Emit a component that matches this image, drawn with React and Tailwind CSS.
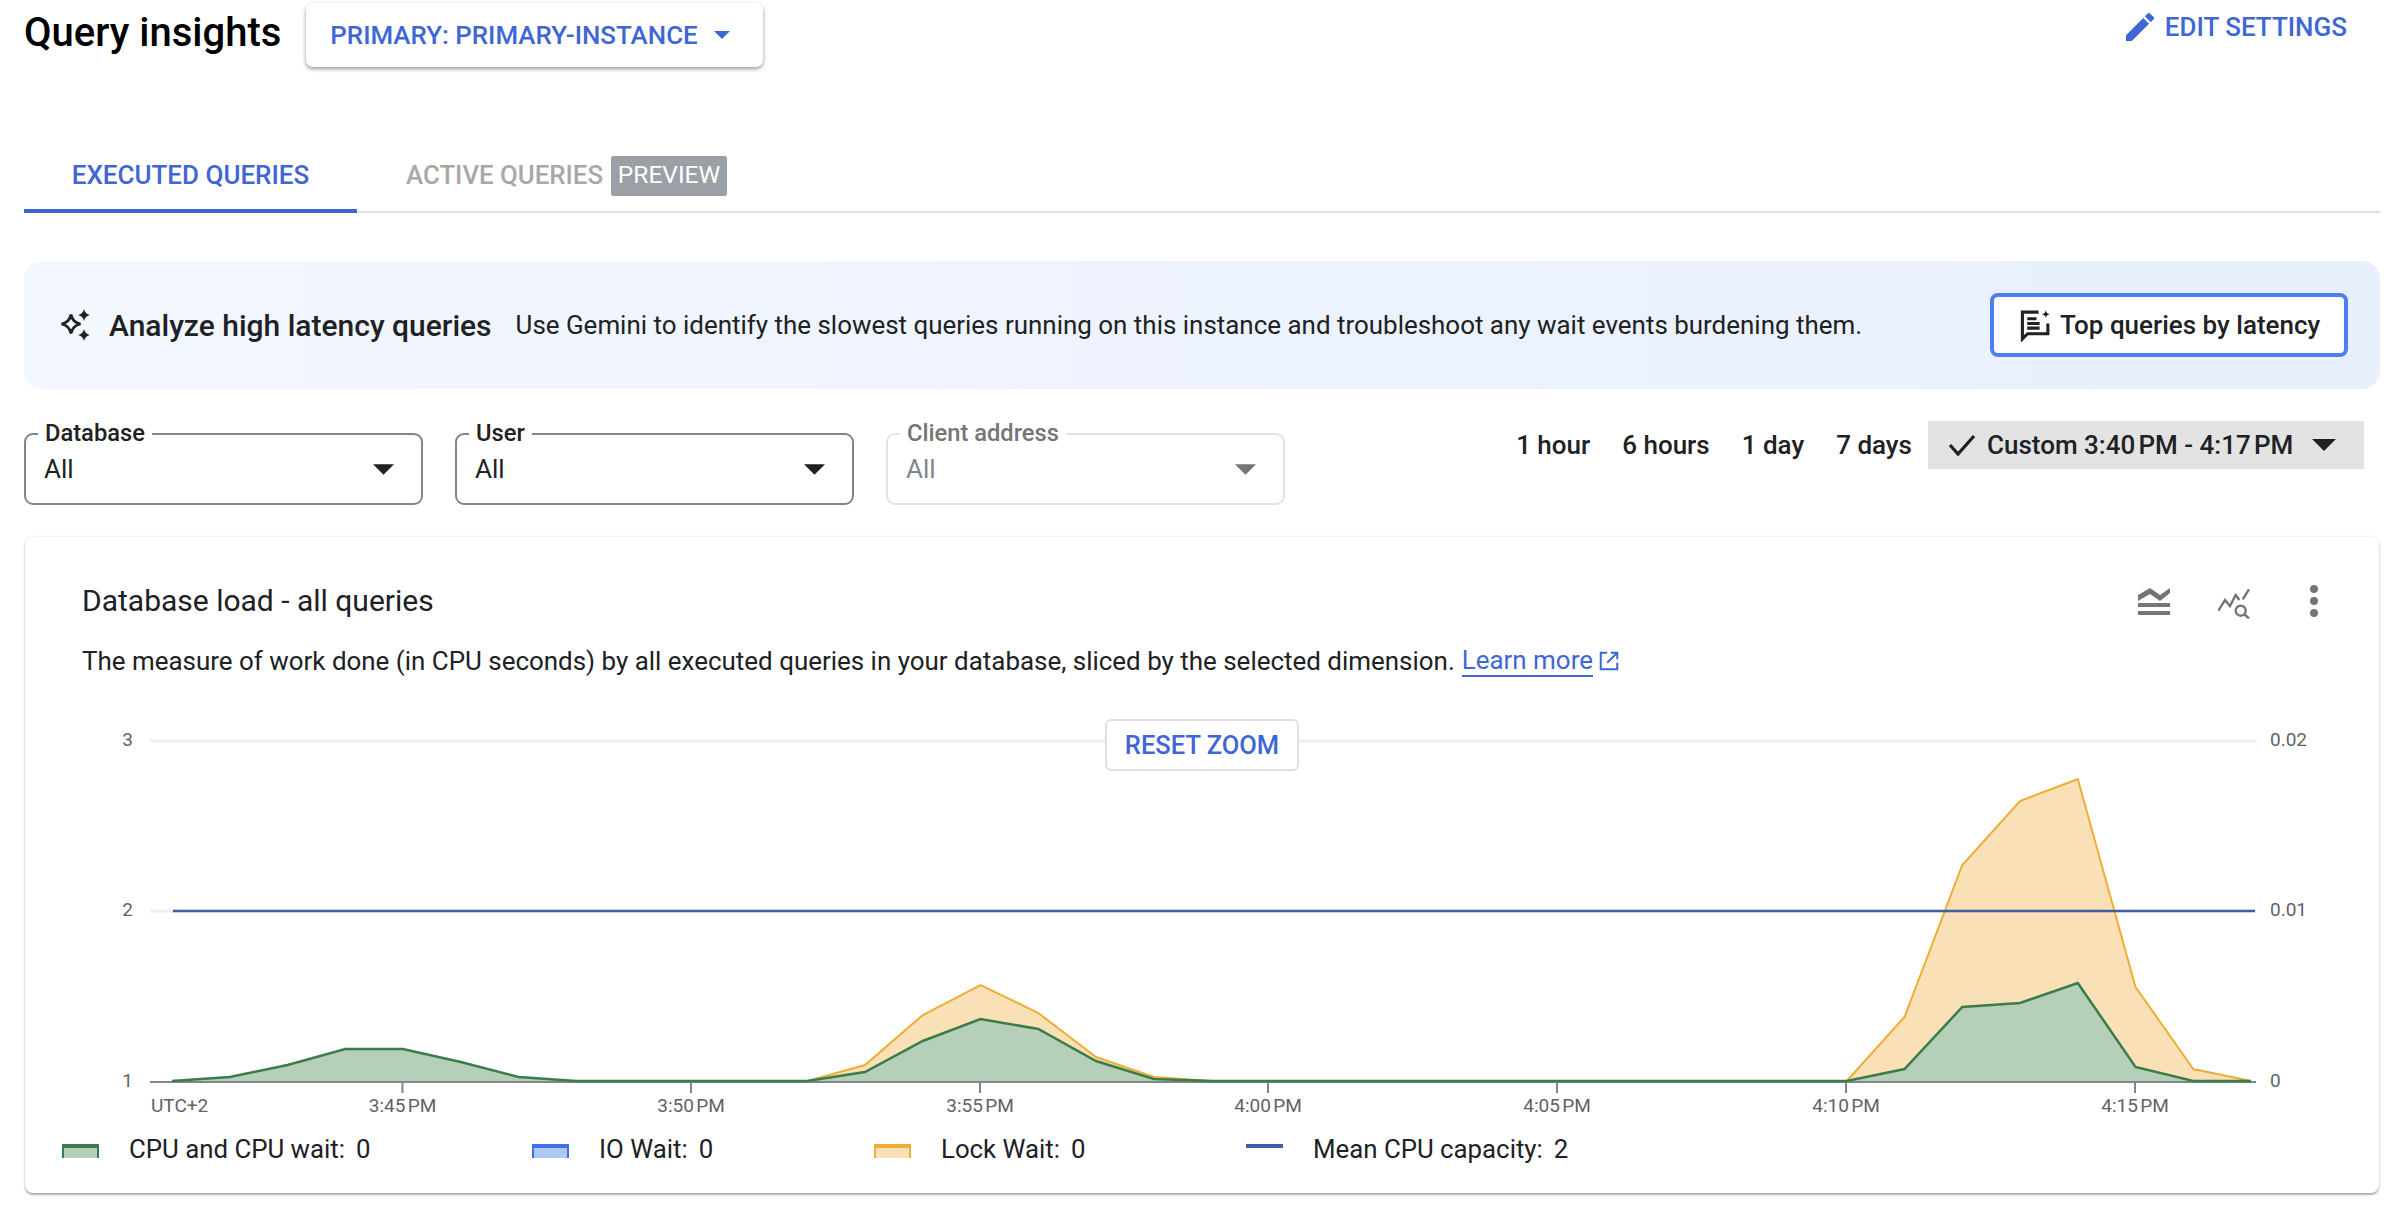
const PER_MIN = 57.75;
const x = (m) => 172 + m * PER_MIN;

// y values per minute, m=0 is 3:41 PM
const green = [1081, 1077, 1065, 1049, 1049, 1062, 1077, 1081, 1081, 1081, 1081, 1081, 1072, 1041, 1019, 1029, 1061, 1079, 1081];
const orange = [1081, 1081, 1081, 1081, 1081, 1081, 1081, 1081, 1081, 1081, 1081, 1081, 1065, 1015, 985, 1013, 1057, 1077, 1081];
for (let m = 19; m < 29; m++) {
  green.push(1081);
  orange.push(1081);
}
green.push(1081, 1069, 1007, 1003, 983, 1067, 1081, 1081);
orange.push(1081, 1017, 865, 801, 779, 987, 1069, 1081);

const toPoints = (values) => values.map((v, i) => `${x(i).toFixed(1)},${v}`).join(' ');
const areaPoints = (values) => `${x(0)},1081 ${toPoints(values)} ${x(values.length - 1)},1081`;

const ticks = [
  ['3:45\u202fPM', 402.5],
  ['3:50\u202fPM', 691],
  ['3:55\u202fPM', 980],
  ['4:00\u202fPM', 1268],
  ['4:05\u202fPM', 1557],
  ['4:10\u202fPM', 1846],
  ['4:15\u202fPM', 2135],
];

function Caret({ className }) {
  return (
    <svg viewBox="0 0 24 12" className={className} fill="currentColor">
      <path d="M0 0h24L12 12z" />
    </svg>
  );
}

function Select({ label, disabled }) {
  return (
    <div
      className={`relative h-[72px] w-[399px] rounded-[9px] border-2 pl-[18px] pr-[27px] flex items-center justify-between ${
        disabled ? 'border-[#e3e3e3] text-[#80868b]' : 'border-[#80868b] text-[#202124]'
      }`}
    >
      <span className={`absolute left-[12px] -top-[15px] bg-white px-[7px] text-[23.7px] leading-[26px] font-medium ${disabled ? 'text-[#757575]' : 'text-[#202124]'}`}>
        {label}
      </span>
      <span className="text-[26px] leading-none">All</span>
      <Caret className={`w-[21px] h-[11px] ${disabled ? 'text-[#757575]' : 'text-[#202124]'}`} />
    </div>
  );
}

function LegendItem({ swatch, label, value, width }) {
  return (
    <div className={`flex items-start ${width}`}>
      <div className={`w-[37px] h-[14px] -mt-[5px] ${swatch}`} />
      <span className="ml-[30px] text-[25.8px] leading-none text-[#202124] -mt-[12px]">{label}:</span>
      <span className="ml-[11px] text-[25.8px] leading-none text-[#202124] -mt-[12px]">{value}</span>
    </div>
  );
}

export default function App() {
  return (
    <div className="w-[2402px] h-[1208px] bg-white overflow-hidden pl-[24px] pr-[22px] font-['Roboto',sans-serif] text-[#202124]">
      <div className="flex items-start h-[142px]">
        <h1 className="mt-[9px] text-[40px] leading-[48px] font-medium text-black">Query insights</h1>
        <button className="ml-[25px] mt-[3px] h-[64px] w-[457px] rounded-[7px] bg-white shadow-[0_2px_4px_rgba(0,0,0,0.4)] flex items-center pl-[24px] text-[25.9px] font-medium text-[#3f67d4]">
          PRIMARY: PRIMARY-INSTANCE
          <Caret className="ml-[16px] w-[16px] h-[8px]" />
        </button>
        <div className="ml-auto mr-[33px] mt-[13px] flex items-center text-[#3f67d4]">
          <svg viewBox="3 3 18 18" className="w-[28px] h-[28px]" fill="currentColor">
            <path d="M3 17.25V21h3.75L17.81 9.94l-3.75-3.75L3 17.25zM20.71 7.04a1 1 0 0 0 0-1.41l-2.34-2.34a1 1 0 0 0-1.41 0l-1.83 1.83 3.75 3.75 1.83-1.83z" />
          </svg>
          <span className="ml-[11px] text-[26px] font-medium leading-none">EDIT SETTINGS</span>
        </div>
      </div>

      <div className="flex items-end h-[71px] border-b-2 border-[#e0e0e0]">
        <div className="w-[333px] h-[71px] -mb-[2px] border-b-[4px] border-[#3f67d4] flex items-center justify-center text-[26px] font-medium text-[#3f67d4]">
          EXECUTED QUERIES
        </div>
        <div className="ml-[49px] h-[69px] flex items-center pb-[2px] text-[25.8px] font-medium text-[#a8a8a8]">
          ACTIVE QUERIES
          <span className="ml-[8px] h-[40px] w-[116px] rounded-[2px] bg-[#9aa0a6] text-white text-[24.5px] font-normal flex items-center justify-center">PREVIEW</span>
        </div>
      </div>

      <div className="mt-[48px] h-[128px] rounded-[18px] bg-linear-to-r from-[#f3f7fe] to-[#e8effd] flex items-center pl-[36px] pr-[32px]">
        <svg viewBox="0 0 32 32" className="w-[32px] h-[32px]" fill="#202124">
          <path d="M11 5.500c1 5.200 4.300 8.500 9.500 9.500-5.200 1-8.500 4.300-9.500 9.500-1-5.200-4.300-8.500-9.500-9.500 5.200-1 8.500-4.300 9.500-9.500z" fill="none" stroke="#202124" strokeWidth="2.800" />
          <path d="M24 0c.7 3.200 2.800 5.300 6 6-3.200.7-5.300 2.800-6 6-.7-3.200-2.800-5.300-6-6 3.200-.7 5.300-2.800 6-6zM24 20c.7 3.200 2.800 5.300 6 6-3.200.7-5.300 2.800-6 6-.7-3.200-2.800-5.300-6-6 3.200-.7 5.300-2.800 6-6z" />
        </svg>
        <span className="ml-[17px] text-[30px] font-medium">Analyze high latency queries</span>
        <span className="ml-[24px] text-[25.95px]">Use Gemini to identify the slowest queries running on this instance and troubleshoot any wait events burdening them.</span>
        <button className="ml-auto w-[358px] h-[64px] rounded-[8px] border-[4px] border-[#4d7ff0] bg-white flex items-center pl-[26px] text-[26px] font-medium">
          <svg viewBox="0 0 30 32" className="w-[31px] h-[33px] shrink-0" fill="none" stroke="#202124" strokeWidth="3">
            <path d="M18 3H2.300v26l5-5H27V14" />
            <path d="M7 9.500h9M7 14h12M7 18.500h12" />
            <path d="M25 1c.4 2.700 1.300 3.600 4 4-2.700.4-3.600 1.300-4 4-.4-2.700-1.300-3.600-4-4 2.700-.4 3.600-1.300 4-4z" fill="#202124" stroke="none" />
          </svg>
          <span className="ml-[9px]">Top queries by latency</span>
        </button>
      </div>

      <div className="mt-[32px] flex items-start h-[116px]">
        <div className="flex mt-[12px] gap-[32px]">
          <Select label="Database" />
          <Select label="User" />
          <Select label="Client address" disabled />
        </div>
        <div className="ml-auto mr-[16px] flex items-center text-[26px] font-medium h-[48px]">
          <span>1 hour</span>
          <span className="ml-[32px]">6 hours</span>
          <span className="ml-[32px]">1 day</span>
          <span className="ml-[32px]">7 days</span>
          <div className="ml-[16px] h-[48px] w-[436px] bg-[#e3e3e3] flex items-center pl-[20px]">
            <svg viewBox="0 0 28 24" className="w-[28px] h-[24px]" fill="none" stroke="#202124" strokeWidth="3.200">
              <path d="M2 12l8 9L26 3" />
            </svg>
            <span className="ml-[11px]">{'Custom 3:40\u202fPM - 4:17\u202fPM'}</span>
            <Caret className="ml-[19px] w-[24px] h-[12px]" />
          </div>
        </div>
      </div>

      <div className="relative w-[2354px] h-[656px] rounded-[8px] bg-white shadow-[0_2px_2px_rgba(0,0,0,0.3),0_0_3px_rgba(0,0,0,0.12)] ml-[1px]">
        <div className="flex items-start pl-[57px] pr-[61px] pt-[47px]">
          <div className="text-[30px] leading-[34px]">Database load - all queries</div>
          <div className="ml-auto flex items-start">
            <svg viewBox="0 0 32 28" className="w-[32px] h-[28px] mt-[3px]" fill="#757575">
              <path d="M0 8l12-7 10 7 10-7v5l-10 8-10-7-12 7zM0 16h32v4H0zM0 24h32v4H0z" />
            </svg>
            <svg viewBox="0 0 32 32" className="w-[32px] h-[32px] ml-[48px] mt-[3px]" fill="none" stroke="#757575" strokeWidth="2.400">
              <path d="M.3 23.700L7 13l5 6 5.700-11 3.600 5M24.700 12.300L31 2.300" />
              <circle cx="22.700" cy="23.700" r="5" />
              <path d="M26.500 27.500l4.500 3.800" />
            </svg>
            <svg viewBox="0 0 8 32" className="w-[8px] h-[32px] ml-[60px] mt-[1px]" fill="#757575">
              <circle cx="4" cy="4" r="4" />
              <circle cx="4" cy="16" r="4" />
              <circle cx="4" cy="28" r="4" />
            </svg>
          </div>
        </div>
        <div className="pl-[57px] mt-[26px] flex items-center text-[25.95px] leading-[30px]">
          The measure of work done (in CPU seconds) by all executed queries in your database, sliced by the selected dimension.
          <a className="ml-[7px] text-[#3f67d4] border-b-2 border-[#3f67d4] leading-[30px]">Learn more</a>
          <svg viewBox="0 0 24 24" className="ml-[5px] w-[22px] h-[22px]" fill="none" stroke="#3f67d4" strokeWidth="2.200">
            <path d="M10 3H3v18h18v-7M14 3h7v7M21 3L10 14" />
          </svg>
        </div>

        <button className="absolute left-[1080px] top-[182px] w-[194px] h-[52px] rounded-[6px] border-2 border-[#e0e0e0] bg-white text-[25.5px] font-medium text-[#3f67d4]">
          RESET ZOOM
        </button>

        <svg className="block mt-[33px]" width="2354" height="410" viewBox="25 710 2354 410">
          <line x1="150" y1="741" x2="2256" y2="741" stroke="#eeeeee" strokeWidth="3" />
          <line x1="150" y1="911" x2="2256" y2="911" stroke="#eeeeee" strokeWidth="3" />
          <polygon points={areaPoints(orange)} fill="#f9e0b7" />
          <polyline points={toPoints(orange)} fill="none" stroke="#efad35" strokeWidth="2" />
          <polygon points={areaPoints(green)} fill="#b6cfb8" />
          <line x1="150" y1="1082" x2="2256" y2="1082" stroke="#80868b" strokeWidth="2" />
          {ticks.map(([label, tx]) => (
            <g key={label}>
              <line x1={tx} y1="1081" x2={tx} y2="1093" stroke="#80868b" strokeWidth="2" />
              <text x={tx} y="1112" textAnchor="middle" fontSize="19" fill="#5f6368" fontFamily="Roboto, sans-serif">{label}</text>
            </g>
          ))}
          <polyline points={toPoints(green)} fill="none" stroke="#3a7d4a" strokeWidth="2.500" />
          <line x1="173" y1="911" x2="2255" y2="911" stroke="#3f5f9f" strokeWidth="2.500" />
          <text x="151" y="1112" fontSize="19" fill="#5f6368" fontFamily="Roboto, sans-serif">UTC+2</text>
          {[['3', 746], ['2', 916], ['1', 1087]].map(([l, ly]) => (
            <text key={l} x="133" y={ly} textAnchor="end" fontSize="19" fill="#5f6368" fontFamily="Roboto, sans-serif">{l}</text>
          ))}
          {[['0.02', 746], ['0.01', 916], ['0', 1087]].map(([l, ly]) => (
            <text key={l} x="2270" y={ly} fontSize="19" fill="#5f6368" fontFamily="Roboto, sans-serif">{l}</text>
          ))}
        </svg>

        <div className="flex pl-[37px] mt-[29px]">
          <LegendItem width="w-[470px]" swatch="border-t-[4px] border-x-2 border-[#3a7d4a] bg-[#b6cfb8]" label="CPU and CPU wait" value="0" />
          <LegendItem width="w-[342px]" swatch="border-t-[4px] border-x-2 border-[#3f72e0] bg-[#adc8f3]" label="IO Wait" value="0" />
          <LegendItem width="w-[372px]" swatch="border-t-[4px] border-x-2 border-[#efad35] bg-[#f9e0b7]" label="Lock Wait" value="0" />
          <LegendItem width="w-[400px]" swatch="border-t-[4px] border-[#3f5f9f] bg-white" label="Mean CPU capacity" value="2" />
        </div>
      </div>
    </div>
  );
}
